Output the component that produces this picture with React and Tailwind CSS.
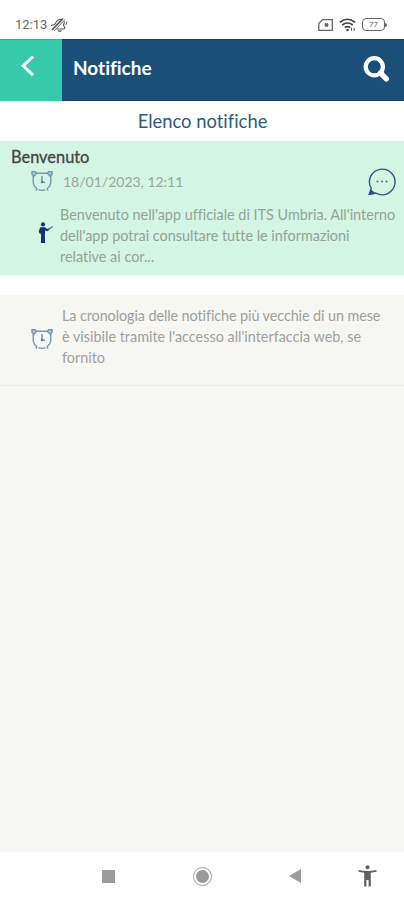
function AlarmIcon() {
  return (
    <svg width="22" height="22" viewBox="0 0 22 22" fill="none" stroke="#7399ae" strokeWidth="1.4">
      <path d="M5.5 3.3h11M2.2 6v6Q2.6 16.5 6 18.6M19.8 6v6Q19.4 16.5 16 18.6M7.5 19.7q3.5 1.4 7 0" />
      <path d="M1 4.5V1.6h3.2l1.6 1.6-3 3zM21 4.5V1.6h-3.2l-1.6 1.6 3 3z" fill="#a9c6cf" />
      <path d="M6 18.4l-1 2.2M16 18.4l1 2.2" />
      <path d="M11 6v6.2h3" strokeWidth="1.5" />
      <circle cx="11" cy="12" r="1.2" fill="#4c7796" stroke="none" />
    </svg>
  )
}

function ChatIcon() {
  return (
    <svg width="28" height="28" viewBox="0 0 28 28" fill="none" stroke="#2b5680" strokeWidth="1.4">
      <path d="M3.2 20.4A12.8 12.8 0 1 1 7.8 25L1.2 26.4z" strokeLinejoin="round" />
      <path d="M1.5 26.2l1.9-3.6 3 2.7z" fill="#2b5680" />
      <g fill="#47708f" stroke="none">
        <circle cx="9.5" cy="13.5" r="1" />
        <circle cx="14" cy="13.5" r="1" />
        <circle cx="18.5" cy="13.5" r="1" />
      </g>
    </svg>
  )
}

function PersonIcon() {
  return (
    <svg width="16" height="22" viewBox="0 0 16 22" fill="#12366b">
      <circle cx="5" cy="2.4" r="2.1" />
      <path d="M2.2 5.2h4.6L9.3 7l1.5-.7.6 1.6-2.4 1.3-1.8-.9-.3 4 .2 8.7H2.9l.2-8-1.2-3L1 9.6l1.6 1.2-.7 1L.6 9.7z" />
      <path d="M10 7.4l4.8-3" stroke="#4b718f" strokeWidth="1.2" />
    </svg>
  )
}

function StatusBar() {
  return (
    <div className="flex h-[39px] items-center justify-between pl-[15px] pr-[17px] pt-[10px]">
      <div className="flex items-center gap-[3px]">
        <span className="font-['Roboto'] text-[13px] leading-none text-[#666]">12:13</span>
        <svg width="18" height="16" viewBox="0 0 18 16" fill="none" stroke="#555" strokeWidth="1.1">
          <path d="M1 8.5l3.5-1L7 4Q9 1.8 12 2.5M14.5 4.5l-1 4 1.5 2-1 1.5H6.5M8 13.5q1.5 1.5 3.5 0" />
          <path d="M2 13L13 1.5" strokeWidth="1.7" />
          <path d="M4 14L15 2.5M16.8 4.5l-.8 3.5" strokeWidth=".9" />
        </svg>
      </div>
      <div className="flex items-center gap-[6px]">
        <svg width="15" height="12" viewBox="0 0 15 12" fill="none" stroke="#666" strokeWidth="1.3">
          <path d="M4.5.7h9.8v10.6H.8V4.5z" />
          <path d="M7 4.5l3 3M10 4.5l-3 3" strokeWidth="1.8" />
        </svg>
        <svg width="17" height="14" viewBox="0 0 17 14" fill="none" stroke="#444" strokeWidth="1.6">
          <path d="M.8 4.3q7.7-6 15.4 0M3.2 7q5.3-4 10.6 0M5.7 9.6q2.8-2 5.6 0" />
          <circle cx="8.5" cy="12" r="1.3" fill="#444" stroke="none" />
          <path d="M12.5 12.8V9.8M15.2 9.8v3" strokeWidth=".9" />
        </svg>
        <div className="flex items-center">
          <span className="flex h-[13px] w-[23px] items-center justify-center rounded-[4px] border border-[#666] font-['Roboto'] text-[8px] leading-none text-[#666]">
            77
          </span>
          <span className="h-1 w-[2px] rounded-r-sm bg-[#666]" />
        </div>
      </div>
    </div>
  )
}

function Header() {
  return (
    <header className="flex h-[62px] border-y border-[#123f6c] bg-[#1a5078]">
      <button className="-my-px flex w-[62px] items-start border-t border-[#2bb596] bg-[#36caab] pl-5 pt-[14px]">
        <svg width="15" height="24" viewBox="0 0 15 24" fill="none" stroke="#fff" strokeWidth="3">
          <path d="M13 2.5L3.2 11.8l9.8 9.3" />
        </svg>
      </button>
      <h1 className="flex-1 pl-[11px] pt-[12px] text-[19px] font-bold leading-[31px] text-white">Notifiche</h1>
      <svg className="mr-[14px] mt-[15px]" width="27" height="28" viewBox="0 0 27 28" fill="none" stroke="#fff">
        <circle cx="11.3" cy="11.8" r="8.6" strokeWidth="4.2" />
        <path d="M17.5 18l5.8 5.8" strokeWidth="5.4" strokeLinecap="round" />
      </svg>
    </header>
  )
}

function NavBar() {
  return (
    <nav className="flex h-12 items-center bg-white pl-[102px]">
      <span className="size-[13px] bg-[#9b9b9b]" />
      <span className="ml-[78px] flex size-[19px] items-center justify-center rounded-full border border-[#9b9b9b]">
        <span className="size-[13px] rounded-full bg-[#9b9b9b]" />
      </span>
      <svg className="ml-[77px]" width="12" height="14" viewBox="0 0 12 14" fill="#9b9b9b">
        <path d="M12 0v14L0 7z" />
      </svg>
      <svg className="ml-[57px]" width="19" height="22" viewBox="0 0 19 22" fill="#606060">
        <circle cx="9.5" cy="2.2" r="2" />
        <path d="M.5 5q9 2 18 0v1.8l-5.7 1V21.5H10.6V15H8.4v6.5H6.2V7.8L.5 6.8z" />
      </svg>
    </nav>
  )
}

export default function App() {
  return (
    <div className="flex h-[900px] w-[404px] flex-col overflow-hidden bg-white font-['Lato',sans-serif] [font-variant-ligatures:none]">
      <StatusBar />
      <Header />

      <h2 className="h-10 pl-px text-center text-[18.4px] leading-[41px] text-[#315a78]">Elenco notifiche</h2>

      <div className="h-[134px] bg-[#d4f5e3] pt-[5px]">
        <div className="pl-[11px] text-[16.4px] leading-[22px] text-[#444] [-webkit-text-stroke:0.3px_#444]">Benvenuto</div>
        <div className="flex h-[36px] pl-[31px] pr-2">
          <div className="pt-[2px]">
            <AlarmIcon />
          </div>
          <span className="flex-1 pl-[10px] pt-[3px] text-[14px] leading-[22px] text-[#9ba69d]">18/01/2023, 12:11</span>
          <ChatIcon />
        </div>
        <div className="flex pl-[38px]">
          <div className="w-[22px] pt-[18px]">
            <PersonIcon />
          </div>
          <p className="whitespace-nowrap text-[14.4px] leading-[21px] text-[#93a399]">
            Benvenuto nell'app ufficiale di ITS Umbria. All'interno
            <br />
            dell'app potrai consultare tutte le informazioni
            <br />
            relative ai cor...
          </p>
        </div>
      </div>

      <div className="mt-5 flex-1 bg-[#f6f7f2]">
        <div className="flex h-[91px] border-b border-[#ebece8] pl-[31px] pt-[10px]">
          <div className="w-[31px] pt-[23px]">
            <AlarmIcon />
          </div>
          <p className="whitespace-nowrap text-[14.4px] leading-[21px] text-[#a0a09d]">
            <span className="tracking-[-0.09px]">La cronologia delle notifiche più vecchie di un mese</span>
            <br />
            è visibile tramite l'accesso all'interfaccia web, se
            <br />
            fornito
          </p>
        </div>
      </div>

      <NavBar />
    </div>
  )
}
